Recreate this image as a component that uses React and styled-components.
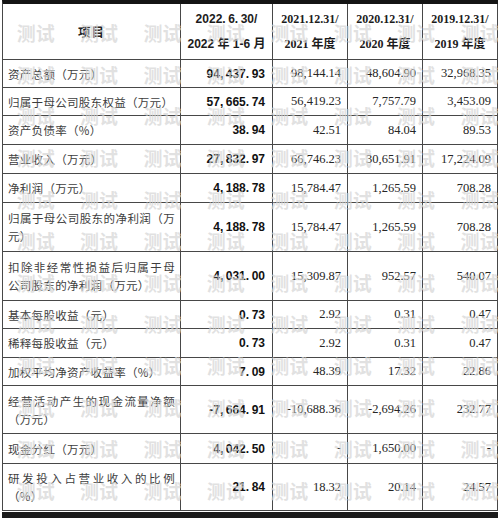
import React from 'react';
import styled, { createGlobalStyle } from 'styled-components';

const GlobalStyle = createGlobalStyle`
  html, body { margin: 0; padding: 0; background: #fff; }
  body { width: 499px; height: 518px; overflow: hidden; }
`;

const Page = styled.div`
  position: relative;
  width: 499px;
  height: 518px;
  overflow: hidden;
  background: #fff;
`;

const Frame = styled.div`
  margin-left: 2px;
  width: 496px;
  display: flex;
  flex-direction: column;
`;

const Table = styled.div`
  border-top: 4px solid #141414;
  border-left: 1px solid #474747;
  display: flex;
  flex-direction: column;
`;

const BottomRule = styled.div`
  margin-top: 1px;
  height: 7px;
  background: #1a1a1a;
`;

const Row = styled.div`
  display: grid;
  grid-template-columns: 178px 92px 75px 75px 75px;
  height: ${p => p.$h}px;
`;

const Cell = styled.div`
  box-sizing: border-box;
  border-right: 1px solid #474747;
  border-bottom: 1px solid #474747;
  display: flex;
  align-items: center;
  min-width: 0;
`;

const LabelCell = styled(Cell)`
  padding: 0 5px 0 5px;
`;

const Label = styled.div`
  width: 100%;
  font-family: "Noto Sans CJK SC", sans-serif;
  font-size: 11.5px;
  letter-spacing: 0.3px;
  line-height: 18px;
  color: #3d3d3d;
  white-space: nowrap;
`;

const LabelLine = styled.span`
  display: block;
  text-align: ${p => (p.$justify ? 'justify' : 'left')};
  text-align-last: ${p => (p.$justify ? 'justify' : 'left')};
  white-space: ${p => (p.$justify ? 'normal' : 'nowrap')};
`;

const HeadCell = styled(Cell)`
  justify-content: center;
`;

const HeadTitle = styled.span`
  font-family: "Noto Sans CJK SC", sans-serif;
  font-weight: 700;
  font-size: 12.5px;
  color: #222;
  letter-spacing: 1px;
`;

const DateHead = styled.div`
  display: flex;
  flex-direction: column;
  align-items: center;
  line-height: 25px;
  font-family: ${p => (p.$sans ? '"Liberation Sans"' : '"Liberation Serif"')}, "Noto Sans CJK SC", sans-serif;
  font-weight: 700;
  font-size: 12px;
  color: #1c1c1c;
  white-space: nowrap;
`;

const NumCell = styled(Cell)`
  justify-content: flex-end;
  padding-right: ${p => (p.$bold ? 7 : 6)}px;
  font-family: ${p => (p.$bold ? '"Liberation Sans"' : '"Liberation Serif"')}, sans-serif;
  font-weight: ${p => (p.$bold ? 700 : 400)};
  font-size: ${p => (p.$bold ? 12 : 12.5)}px;
  color: ${p => (p.$bold ? '#111' : '#262626')};
  white-space: nowrap;
`;

const Punct = styled.span`
  margin-right: 2.5px;
`;

const Watermark = styled.div`
  position: absolute;
  left: 4px;
  top: 12px;
  display: grid;
  grid-template-columns: repeat(8, 63.4px);
  grid-auto-rows: 41.6px;
  pointer-events: none;
`;

const Mark = styled.span`
  display: flex;
  align-items: center;
  justify-content: center;
  font-family: "Noto Sans CJK SC", sans-serif;
  font-weight: 700;
  font-size: 19px;
  color: rgba(214, 214, 214, 0.72);
`;

const Spaced = ({ text }) =>
  text.split(/([,.])/).map((part, i) =>
    part === ',' || part === '.' ? <Punct key={i}>{part}</Punct> : <React.Fragment key={i}>{part}</React.Fragment>
  );

const rows = [
  { label: ['资产总额（万元）'], h: 28, v: ['94,437.93', '98,144.14', '48,604.90', '32,968.35'] },
  { label: ['归属于母公司股东权益（万元）'], h: 28, v: ['57,665.74', '56,419.23', '7,757.79', '3,453.09'] },
  { label: ['资产负债率（%）'], h: 29, v: ['38.94', '42.51', '84.04', '89.53'] },
  { label: ['营业收入（万元）'], h: 29, v: ['27,832.97', '66,746.23', '30,651.91', '17,224.09'] },
  { label: ['净利润（万元）'], h: 29, v: ['4,188.78', '15,784.47', '1,265.59', '708.28'] },
  { label: ['归属于母公司股东的净利润（万', '元）'], h: 49, v: ['4,188.78', '15,784.47', '1,265.59', '708.28'] },
  { label: ['扣除非经常性损益后归属于母', '公司股东的净利润（万元）'], h: 49, v: ['4,031.00', '15,309.87', '952.57', '540.07'] },
  { label: ['基本每股收益（元）'], h: 28, v: ['0.73', '2.92', '0.31', '0.47'] },
  { label: ['稀释每股收益（元）'], h: 29, v: ['0.73', '2.92', '0.31', '0.47'] },
  { label: ['加权平均净资产收益率（%）'], h: 28, v: ['7.09', '48.39', '17.32', '22.86'] },
  { label: ['经营活动产生的现金流量净额', '（万元）'], h: 48, v: ['-7,664.91', '-10,688.36', '-2,694.26', '232.77'] },
  { label: ['现金分红（万元）'], h: 30, v: ['4,042.50', '-', '1,650.00', '-'] },
  { label: ['研发投入占营业收入的比例', '（%）'], h: 47, v: ['21.84', '18.32', '20.14', '24.57'] },
];

const dates = [
  ['2021.12.31/', '2021 年度'],
  ['2020.12.31/', '2020 年度'],
  ['2019.12.31/', '2019 年度'],
];

export default function App() {
  return (
    <Page>
      <GlobalStyle />
      <Frame>
        <Table>
          <Row $h={56}>
            <HeadCell><HeadTitle>项目</HeadTitle></HeadCell>
            <HeadCell>
              <DateHead $sans>
                <span><Spaced text="2022.6.30/" /></span>
                <span>2022 年 1-6 月</span>
              </DateHead>
            </HeadCell>
            {dates.map(d => (
              <HeadCell key={d[0]}>
                <DateHead>
                  <span>{d[0]}</span>
                  <span>{d[1]}</span>
                </DateHead>
              </HeadCell>
            ))}
          </Row>
          {rows.map((r, i) => (
            <Row key={i} $h={r.h}>
              <LabelCell>
                <Label>
                  {r.label.map((l, j) => (
                    <LabelLine key={j} $justify={r.label.length > 1 && j === 0}>{l}</LabelLine>
                  ))}
                </Label>
              </LabelCell>
              <NumCell $bold><span><Spaced text={r.v[0]} /></span></NumCell>
              <NumCell>{r.v[1]}</NumCell>
              <NumCell>{r.v[2]}</NumCell>
              <NumCell>{r.v[3]}</NumCell>
            </Row>
          ))}
        </Table>
        <BottomRule />
      </Frame>
      <Watermark>
        {Array.from({ length: 96 }).map((_, i) => (
          <Mark key={i}>测试</Mark>
        ))}
      </Watermark>
    </Page>
  );
}
